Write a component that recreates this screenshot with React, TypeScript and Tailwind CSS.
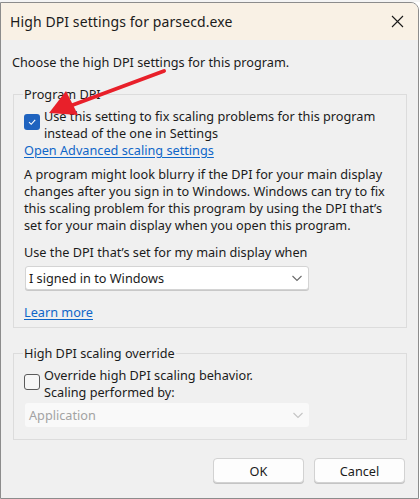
import React from "react";

const font = { fontFamily: '"Noto Sans", "Liberation Sans", sans-serif' };

function Chevron({ color }: { color: string }) {
  return (
    <svg width="12" height="12" viewBox="0 0 12 12" fill="none">
      <path d="M1.5 4 L6 8.5 L10.5 4" stroke={color} strokeWidth="1.1" />
    </svg>
  );
}

export default function App() {
  return (
    <div className="w-[420px] h-[499px] bg-white relative overflow-hidden text-[#1b1b1b]" style={font}>
      <div className="h-[2px] bg-[#f4f4f4]" />
      <div className="w-[419px] h-[497px] border-l border-r border-b border-t border-[#8c8c8c] rounded-tr-[8px] overflow-hidden flex flex-col bg-[#f0f0f0]">
        <div className="h-[37px] shrink-0 bg-[#f9f1e5] flex items-center justify-between pl-[9px] pr-[14px]">
          <span className="text-[14px] tracking-[0.1px] -mt-[1px]">High DPI settings for parsecd.exe</span>
          <svg width="13" height="13" viewBox="0 0 13 13">
            <path d="M1 1 L12 12 M12 1 L1 12" stroke="#1a1a1a" strokeWidth="1.1" />
          </svg>
        </div>
        <div className="flex flex-col text-[12.7px] leading-[16px]">
          <div className="pl-[11px] mt-[14px]">Choose the high DPI settings for this program.</div>

          <fieldset className="ml-[12px] w-[394px] mt-[16px] border border-[#dcdcdc] pl-[10px] pr-[11px] pb-[7px]">
            <legend className="px-[1px] -ml-[1px] leading-[16px]">Program DPI</legend>
            <div className="flex mt-[6px]">
              <div className="w-[16px] h-[16px] mt-[6px] shrink-0 rounded-[3px] bg-[#1f63bf] flex items-center justify-center">
                <svg width="10" height="10" viewBox="0 0 10 10" fill="none">
                  <path d="M2 5.2 L4.2 7.3 L8.2 2.8" stroke="white" strokeWidth="1.1" />
                </svg>
              </div>
              <div className="ml-[4px] leading-[17px]">
                Use this setting to fix scaling problems for this program<br />instead of the one in Settings
              </div>
            </div>
            <div className="text-[#0f66c8] underline underline-offset-2 leading-[16px]">Open Advanced scaling settings</div>
            <p className="mt-[8px] leading-[17px]">
              A program might look blurry if the DPI for your main display changes after you sign in to Windows. Windows can try to fix this scaling problem for this program by using the DPI that’s set for your main display when you open this program.
            </p>
            <div className="mt-[10px] leading-[17px]">Use the DPI that’s set for my main display when</div>
            <div className="mt-[5px] ml-[1px] w-[284px] h-[24px] bg-white border border-[#d4d4d4] rounded-[3px] shadow-[0_1px_0_#c8c8c8] flex items-center justify-between pl-[3px] pr-[5px]">
              <span>I signed in to Windows</span>
              <Chevron color="#6a6a6a" />
            </div>
            <div className="mt-[14px] text-[#0f66c8] underline underline-offset-2">Learn more</div>
          </fieldset>

          <fieldset className="ml-[12px] w-[394px] mt-[17px] border border-[#dcdcdc] pl-[10px] pr-[11px] pb-[12px]">
            <legend className="px-[1px] -ml-[1px] leading-[16px]">High DPI scaling override</legend>
            <div className="flex mt-[6px]">
              <div className="w-[16px] h-[16px] mt-[7px] shrink-0 rounded-[3px] border border-[#5a5a5a] bg-[#f6f6f6]" />
              <div className="ml-[4px] leading-[17px]">
                Override high DPI scaling behavior.<br />Scaling performed by:
              </div>
            </div>
            <div className="mt-[2px] ml-[1px] w-[284px] h-[24px] bg-[#f9f9f9] rounded-[3px] flex items-center justify-between pl-[4px] pr-[5px] text-[#a3a3a3]">
              <span>Application</span>
              <Chevron color="#c4c4c4" />
            </div>
          </fieldset>

          <div className="flex justify-end gap-[10px] pr-[13px] mt-[18px]">
            <div className="w-[91px] h-[25px] bg-[#fdfdfd] border border-[#d2d2d2] rounded-[4px] shadow-[0_1px_0_#c4c4c4] flex items-center justify-center">OK</div>
            <div className="w-[91px] h-[25px] bg-[#fdfdfd] border border-[#d2d2d2] rounded-[4px] shadow-[0_1px_0_#c4c4c4] flex items-center justify-center">Cancel</div>
          </div>
        </div>
      </div>
      <svg className="absolute left-0 top-0 pointer-events-none" width="420" height="499">
        <line x1="164" y1="71" x2="70" y2="106" stroke="#e8202a" strokeWidth="4" strokeLinecap="round" />
        <polygon points="49,113 66,91 78,115" fill="#e8202a" />
      </svg>
    </div>
  );
}
